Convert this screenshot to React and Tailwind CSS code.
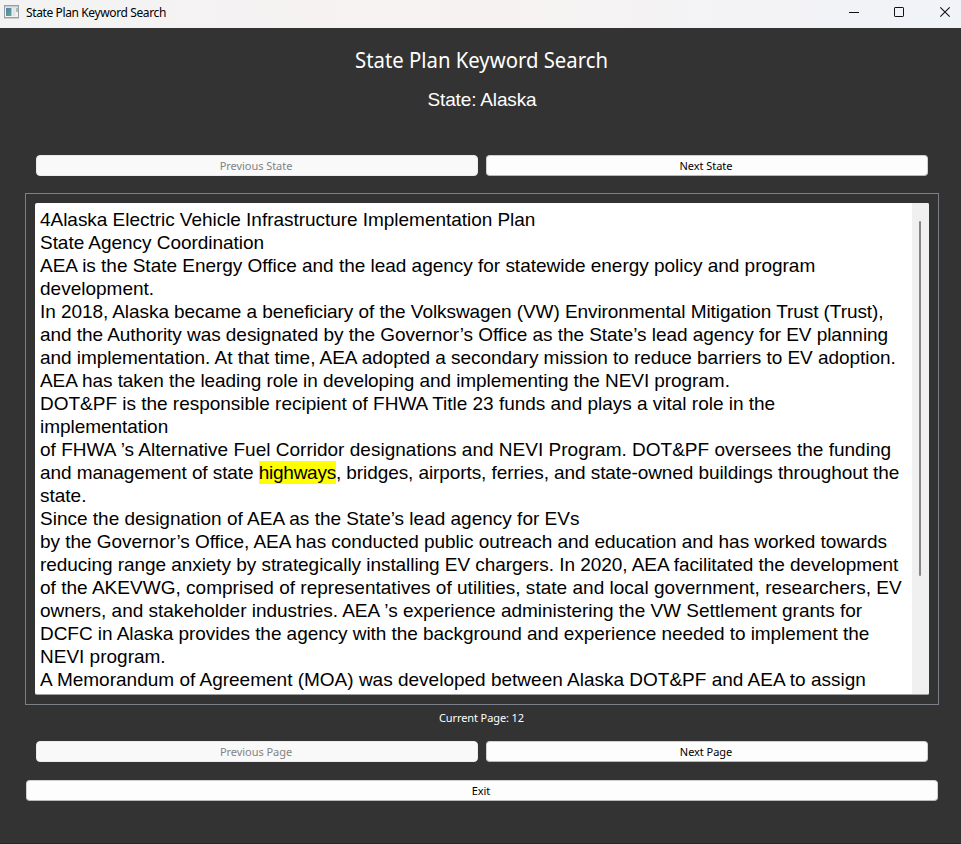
import React from "react";

const LINES = [
  ["4Alaska Electric Vehicle Infrastructure Implementation Plan", "tracking-[-0.035px]"],
  ["State Agency Coordination", "tracking-[-0.04px]"],
  ["AEA is the State Energy Office and the lead agency for statewide energy policy and program", "tracking-[-0.02px]"],
  ["development.", ""],
  ["In 2018, Alaska became a beneficiary of the Volkswagen (VW) Environmental Mitigation Trust (Trust),", "tracking-[-0.07px]"],
  ["and the Authority was designated by the Governor’s Office as the State’s lead agency for EV planning", "tracking-[-0.05px]"],
  ["and implementation. At that time, AEA adopted a secondary mission to reduce barriers to EV adoption.", "tracking-[-0.04px]"],
  ["AEA has taken the leading role in developing and implementing the NEVI program.", "tracking-[-0.065px]"],
  ["DOT&PF is the responsible recipient of FHWA Title 23 funds and plays a vital role in the", "tracking-[-0.015px]"],
  ["implementation", "tracking-[-0.05px]"],
  ["of FHWA ’s Alternative Fuel Corridor designations and NEVI Program. DOT&PF oversees the funding", "tracking-[0.01px]"],
  ["and management of state highways, bridges, airports, ferries, and state-owned buildings throughout the", "tracking-[-0.085px]"],
  ["state.", ""],
  ["Since the designation of AEA as the State’s lead agency for EVs", ""],
  ["by the Governor’s Office, AEA has conducted public outreach and education and has worked towards", "tracking-[-0.035px]"],
  ["reducing range anxiety by strategically installing EV chargers. In 2020, AEA facilitated the development", "tracking-[-0.055px]"],
  ["of the AKEVWG, comprised of representatives of utilities, state and local government, researchers, EV", "tracking-[0.02px]"],
  ["owners, and stakeholder industries. AEA ’s experience administering the VW Settlement grants for", "tracking-[-0.025px]"],
  ["DCFC in Alaska provides the agency with the background and experience needed to implement the", "tracking-[-0.055px]"],
  ["NEVI program.", ""],
  ["A Memorandum of Agreement (MOA) was developed between Alaska DOT&PF and AEA to assign", ""],
];

const KEYWORD = "highways";

function Line({ text, tracking }) {
  const [before, after] = text.split(KEYWORD);
  return (
    <p className={"h-[23px] whitespace-nowrap leading-[23px] " + tracking}>
      {before}
      {after !== undefined && (
        <mark className="inline-block h-[23px] bg-[#ffff00] tracking-[-0.25px] text-black">{KEYWORD}</mark>
      )}
      {after}
    </p>
  );
}

function Button({ children, disabled = false }) {
  return (
    <button
      disabled={disabled}
      className={
        "flex h-[21px] min-w-0 flex-1 items-center justify-center rounded-[4px] border pr-[2px] text-[11px] leading-none tracking-[-0.05px] " +
        (disabled
          ? "border-[#ececec] bg-[#f9f9f9] text-[#838383]"
          : "border-[#d0d0d0] border-b-[#b9b9b9] bg-[#fdfdfd] text-black")
      }
    >
      {children}
    </button>
  );
}

function TitleBar() {
  return (
    <header className="flex h-7 items-center bg-gradient-to-r from-[#f3f3f3] via-[#f6f2f1] to-[#f0f3f8] pl-1">
      <svg width="15" height="14" viewBox="0 0 15 14" className="-mt-[5px]">
        <defs>
          <linearGradient id="pane" x1="0" y1="0" x2="1" y2="1">
            <stop offset="0" stopColor="#4b7fb5" />
            <stop offset="1" stopColor="#63ad7c" />
          </linearGradient>
        </defs>
        <rect x="0.5" y="0.5" width="14" height="12" fill="#f4f4f6" stroke="#9c9da1" />
        <rect x="1" y="1" width="13" height="1.5" fill="#c9cbd0" />
        <rect x="2" y="3" width="5.5" height="8" fill="url(#pane)" />
        <rect x="8.5" y="3" width="3" height="8" fill="#dfe3ea" />
        <rect x="12" y="3" width="2" height="4" fill="#9ec3bd" />
        <rect x="0" y="13" width="15" height="1" fill="#cfcfcf" />
      </svg>
      <span className="-mt-[3px] ml-[7px] font-['Noto_Sans',sans-serif] text-[12px] tracking-[-0.38px] text-black">
        State Plan Keyword Search
      </span>
      <svg width="112" height="28" viewBox="0 0 112 28" className="ml-auto" fill="none" stroke="#111">
        <path d="M0 12.5H10" />
        <rect x="45.5" y="7.5" width="9" height="9" rx="0.6" />
        <path d="M91.3 7.3L100.7 16.7M100.7 7.3L91.3 16.7" strokeWidth="1.1" />
      </svg>
    </header>
  );
}

export default function App() {
  return (
    <div className="flex h-[844px] w-[961px] flex-col overflow-hidden bg-[#333333] font-['Noto_Sans',sans-serif]">
      <TitleBar />
      <main className="flex flex-col pl-[25px] pr-[22px]">
        <h1 className="mt-4 scale-x-[0.923] pr-px text-center text-[22px] leading-[30px] text-white">
          State Plan Keyword Search
        </h1>
        <h2 className="mt-[14px] text-center font-['Liberation_Sans',sans-serif] text-[19px] leading-[23px] tracking-[-0.15px] text-white">
          State: Alaska
        </h2>
        <div className="mx-[11px] mt-11 flex gap-2">
          <Button disabled>Previous State</Button>
          <Button>Next State</Button>
        </div>
        <section className="mt-[17px] h-[512px] border border-[#7a7f89] p-[9px]">
          <div className="flex h-[492px] overflow-hidden rounded-[2px] border-b border-[#a0a0a0] bg-white">
            <div className="min-w-0 flex-1 pl-[5px] pt-[5px] font-['Liberation_Sans',sans-serif] text-[19px] text-black">
              {LINES.map(([text, tracking]) => (
                <Line key={text} text={text} tracking={tracking} />
              ))}
            </div>
            <div className="w-[17px] bg-[#f0f0f0] pl-[7px] pt-[18px]">
              <div className="h-[355px] w-[2px] rounded-full bg-[#868686]" />
            </div>
          </div>
        </section>
        <p className="mt-[5px] pr-px text-center text-[11px] leading-4 tracking-[-0.1px] text-white">Current Page: 12</p>
        <div className="mx-[11px] mt-[15px] flex gap-2">
          <Button disabled>Previous Page</Button>
          <Button>Next Page</Button>
        </div>
        <div className="mx-px mt-[18px] flex">
          <Button>Exit</Button>
        </div>
      </main>
      <div className="mt-auto h-px bg-[#282626]" />
    </div>
  );
}
